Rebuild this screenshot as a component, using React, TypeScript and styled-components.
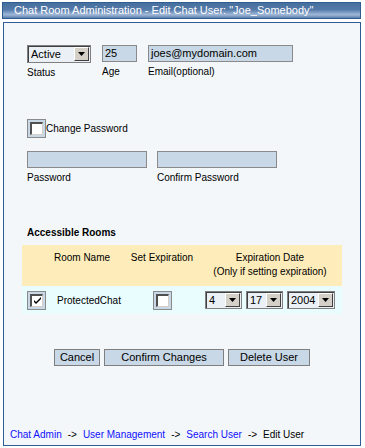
import { createGlobalStyle } from 'styled-components';
import styled from 'styled-components';

const GlobalStyle = createGlobalStyle`
    body {
        margin: 0;
        background: #ffffff;
        font-family: "Liberation Sans", Arial, sans-serif;
        font-size: 11px;
        color: #000000;
    }
`;

const Page = styled.div`
    width: 365px;
    height: 448px;
    padding: 2px 4px 0 2px;
    box-sizing: border-box;
`;

const TitleBar = styled.div`
    height: 17px;
    box-sizing: border-box;
    border: 1px solid #2f5c91;
    background: linear-gradient(#46709f 0%, #5479a8 45%, #7d9cc4 62%, #9fb8d6 78%, #5c7fad 100%);
    color: #ffffff;
    padding-left: 11px;
    line-height: 14px;
    font-size: 11px;
    white-space: nowrap;
`;

const Panel = styled.div`
    margin: 3px 0 0 1px;
    height: 424px;
    box-sizing: border-box;
    border: 1px solid #2d5d95;
    background: #f3f7fa;
    padding: 22px 0 0 18px;
    display: flex;
    flex-direction: column;
`;

const Row = styled.div<{ $gap: number; $top?: number }>`
    display: flex;
    gap: ${p => p.$gap}px;
    margin-left: 5px;
    margin-top: ${p => p.$top ?? 0}px;
`;

const Field = styled.div`
    display: flex;
    flex-direction: column;
`;

const Label = styled.span`
    margin-top: 4px;
    font-size: 10px;
    line-height: 12px;
`;

const TextBox = styled.div<{ $w: number }>`
    width: ${p => p.$w}px;
    height: 17px;
    box-sizing: border-box;
    background: #c8d8e6;
    border: 1px solid #8a8a8a;
    padding-left: 2px;
    line-height: 15px;
    font-size: 11px;
`;

const SelectBox = styled.div<{ $w: number }>`
    width: ${p => p.$w}px;
    height: 18px;
    flex-shrink: 0;
    box-sizing: border-box;
    border: 1px solid #808080;
    box-shadow: inset 1px 1px 0 #404040;
    background: #eaf0f5;
    display: flex;
    align-items: stretch;
    padding: 1px;
`;

const SelectValue = styled.span`
    flex: 1;
    padding-left: 2px;
    line-height: 15px;
    font-size: 11px;
`;

const ArrowBtn = styled.span`
    width: 15px;
    box-sizing: border-box;
    background: #d4d0c8;
    border-top: 1px solid #ffffff;
    border-left: 1px solid #ffffff;
    border-right: 1px solid #404040;
    border-bottom: 1px solid #404040;
    display: flex;
    align-items: center;
    justify-content: center;
`;

const CheckOuter = styled.div`
    width: 19px;
    height: 19px;
    box-sizing: border-box;
    background: #c8d8e6;
    border: 1px solid #8a8a8a;
    display: flex;
    align-items: center;
    justify-content: center;
    flex-shrink: 0;
`;

const CheckInner = styled.div`
    width: 13px;
    height: 13px;
    box-sizing: border-box;
    background: #ffffff;
    border-top: 2px solid #505050;
    border-left: 2px solid #505050;
    border-right: 1px solid #d4d0c8;
    border-bottom: 1px solid #d4d0c8;
    display: flex;
    align-items: center;
    justify-content: center;
`;

const CheckLine = styled.label`
    display: flex;
    align-items: center;
    margin: 40px 0 0 5px;
    font-size: 10px;
`;

const SectionTitle = styled.div`
    margin: 43px 0 0 5px;
    font-weight: bold;
    font-size: 10px;
    line-height: 12px;
`;

const Table = styled.div`
    margin-top: 6px;
    width: 320px;
`;

const HeadRow = styled.div`
    display: grid;
    grid-template-columns: 30px 60px 100px 130px;
    background: #feedba;
    height: 41px;
    align-items: start;
    padding-top: 6px;
    box-sizing: border-box;
    font-size: 10px;
    line-height: 14px;
`;

const HeadCell = styled.div<{ $pr?: number }>`
    text-align: center;
    white-space: nowrap;
    padding-right: ${p => p.$pr ?? 0}px;
`;

const BodyRow = styled.div`
    display: grid;
    grid-template-columns: 30px 60px 100px 130px;
    background: #e9fcfe;
    height: 28px;
    align-items: center;
    font-size: 10px;
`;

const Cell = styled.div<{ $align: string; $pl?: number; $pr?: number }>`
    display: flex;
    justify-content: ${p => p.$align};
    padding-left: ${p => p.$pl ?? 0}px;
    padding-right: ${p => p.$pr ?? 0}px;
    white-space: nowrap;
    gap: 4px;
`;

const Buttons = styled.div`
    display: flex;
    gap: 4px;
    margin: 35px 0 0 32px;
`;

const Button = styled.button<{ $w: number }>`
    width: ${p => p.$w}px;
    height: 17px;
    padding: 0;
    background: #c8d8e6;
    border: 1px solid #7f7f7f;
    font-family: "Liberation Sans", Arial, sans-serif;
    font-size: 11px;
    color: #000000;
    line-height: 15px;
`;

const Crumbs = styled.div`
    margin: auto 0 4px -12px;
    font-size: 10px;
    line-height: 12px;
    white-space: nowrap;
`;

const Crumb = styled.a`
    color: #1010ff;
    text-decoration: none;
`;

const Sep = styled.span`
    margin: 0 6px;
`;

const Arrow = () => (
    <svg width="7" height="4" viewBox="0 0 7 4">
        <path d="M0 0h7L3.5 4z" fill="#000" />
    </svg>
);

const Tick = () => (
    <svg width="9" height="9" viewBox="0 0 9 9">
        <path d="M1 4l2 2 5-5v2L3 8 1 6z" fill="#000" />
    </svg>
);

function Select({ value, w }: { value: string; w: number }) {
    return (
        <SelectBox $w={w}>
            <SelectValue>{value}</SelectValue>
            <ArrowBtn><Arrow /></ArrowBtn>
        </SelectBox>
    );
}

function Check({ on }: { on?: boolean }) {
    return (
        <CheckOuter>
            <CheckInner>{on && <Tick />}</CheckInner>
        </CheckOuter>
    );
}

export default function App() {
    return (
        <Page>
            <GlobalStyle />
            <TitleBar>Chat Room Administration - Edit Chat User: "Joe_Somebody"</TitleBar>
            <Panel>
                <Row $gap={11}>
                    <Field>
                        <Select value="Active" w={64} />
                        <Label>Status</Label>
                    </Field>
                    <Field>
                        <TextBox $w={35}>25</TextBox>
                        <Label>Age</Label>
                    </Field>
                    <Field>
                        <TextBox $w={145}>joes@mydomain.com</TextBox>
                        <Label>Email(optional)</Label>
                    </Field>
                </Row>

                <CheckLine>
                    <Check />
                    Change Password
                </CheckLine>

                <Row $gap={10} $top={13}>
                    <Field>
                        <TextBox $w={120} />
                        <Label>Password</Label>
                    </Field>
                    <Field>
                        <TextBox $w={120} />
                        <Label>Confirm Password</Label>
                    </Field>
                </Row>

                <SectionTitle>Accessible Rooms</SectionTitle>

                <Table>
                    <HeadRow>
                        <HeadCell />
                        <HeadCell>Room Name</HeadCell>
                        <HeadCell>Set Expiration</HeadCell>
                        <HeadCell $pr={14}>Expiration Date<br />(Only if setting expiration)</HeadCell>
                    </HeadRow>
                    <BodyRow>
                        <Cell $align="flex-start" $pl={5}><Check on /></Cell>
                        <Cell $align="flex-start" $pl={5}>ProtectedChat</Cell>
                        <Cell $align="center"><Check /></Cell>
                        <Cell $align="center" $pr={14}>
                            <Select value="4" w={37} />
                            <Select value="17" w={37} />
                            <Select value="2004" w={48} />
                        </Cell>
                    </BodyRow>
                </Table>

                <Buttons>
                    <Button $w={46}>Cancel</Button>
                    <Button $w={120}>Confirm Changes</Button>
                    <Button $w={82}>Delete User</Button>
                </Buttons>

                <Crumbs>
                    <Crumb href="#">Chat Admin</Crumb><Sep>-&gt;</Sep><Crumb href="#">User Management</Crumb><Sep>-&gt;</Sep><Crumb href="#">Search User</Crumb><Sep>-&gt;</Sep>Edit User
                </Crumbs>
            </Panel>
        </Page>
    );
}
